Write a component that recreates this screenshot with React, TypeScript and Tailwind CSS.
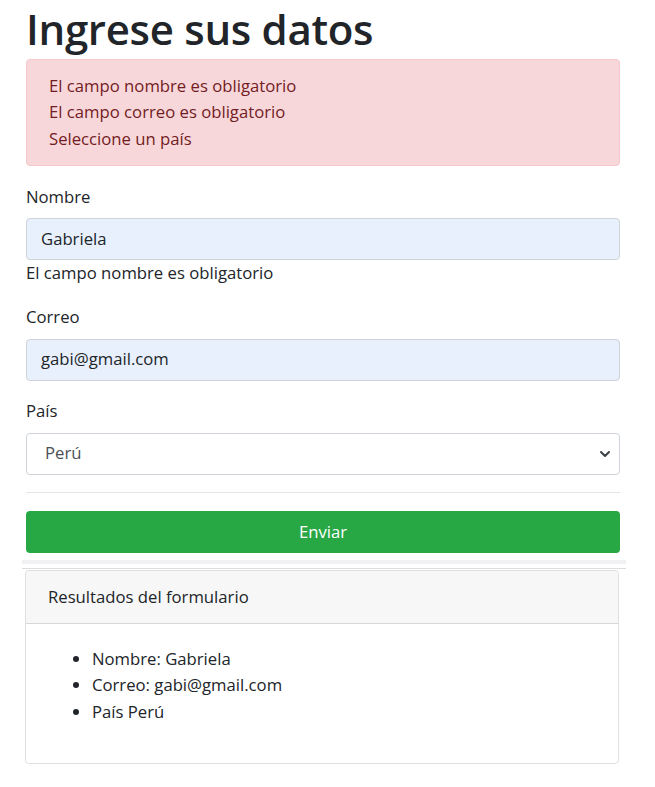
import React from "react";

function Field({
  label,
  value,
  hint,
}: {
  label: string;
  value: string;
  hint?: string;
}) {
  return (
    <div className="mb-[17.6px]">
      <label className="block mb-[8px]">{label}</label>
      <div className="h-[42px] flex items-center px-[14px] rounded-[4px] border border-[#ced4da] bg-[#e8f0fe] text-[#212529]">
        {value}
      </div>
      {hint && <div>{hint}</div>}
    </div>
  );
}

export default function App() {
  return (
    <div
      className="min-h-[787px] bg-white text-[#212529] text-[16.7px] leading-[26.4px]"
      style={{ fontFamily: '"Open Sans", "Noto Sans", sans-serif' }}
    >
      <div className="pl-[26px] w-[620px]">
        <h1 className="text-[42px] leading-[57px] font-semibold mb-[2px] tracking-[-0.3px]">
          Ingrese sus datos
        </h1>

        <div className="mb-[17.6px] rounded-[4px] border border-[#f5c6cb] bg-[#f8d7da] text-[#721c24] px-[22px] py-[13px]">
          <div>El campo nombre es obligatorio</div>
          <div>El campo correo es obligatorio</div>
          <div>Seleccione un país</div>
        </div>

        <Field
          label="Nombre"
          value="Gabriela"
          hint="El campo nombre es obligatorio"
        />
        <Field label="Correo" value="gabi@gmail.com" />

        <div>
          <label className="block mb-[8px]">País</label>
          <div className="h-[42px] flex items-center justify-between pl-[18px] pr-[8px] rounded-[4px] border border-[#ced4da] bg-white text-[#495057]">
            <span>Perú</span>
            <svg width="12" height="12" viewBox="0 0 12 12" fill="none">
              <path
                d="M2 4 L6 8 L10 4"
                stroke="#3c4043"
                strokeWidth="2"
                strokeLinecap="round"
                strokeLinejoin="round"
              />
            </svg>
          </div>
        </div>

        <hr className="my-[17.6px] border-0 border-t border-[rgba(0,0,0,0.1)]" />

        <button className="w-full h-[42px] rounded-[4px] bg-[#28a745] text-white">
          Enviar
        </button>
      </div>

      <div className="mt-[7px] ml-[22px] w-[604px] h-[4px] bg-[#f1f1f3]" />
      <div className="mt-[4px] ml-[22px] w-[604px] h-px bg-[#dcdcdc]" />

      <div className="ml-[25px] w-[594px] mt-[1px] rounded-[4px] border border-[rgba(0,0,0,0.125)]">
        <div className="h-[53px] flex items-center px-[22px] bg-[#f7f7f7] border-b border-[rgba(0,0,0,0.125)] rounded-t-[4px]">
          Resultados del formulario
        </div>
        <div className="p-[22px]">
          <ul className="list-disc pl-[44px] mb-[16px]">
            <li>Nombre: Gabriela</li>
            <li>Correo: gabi@gmail.com</li>
            <li>País Perú</li>
          </ul>
        </div>
      </div>
    </div>
  );
}
